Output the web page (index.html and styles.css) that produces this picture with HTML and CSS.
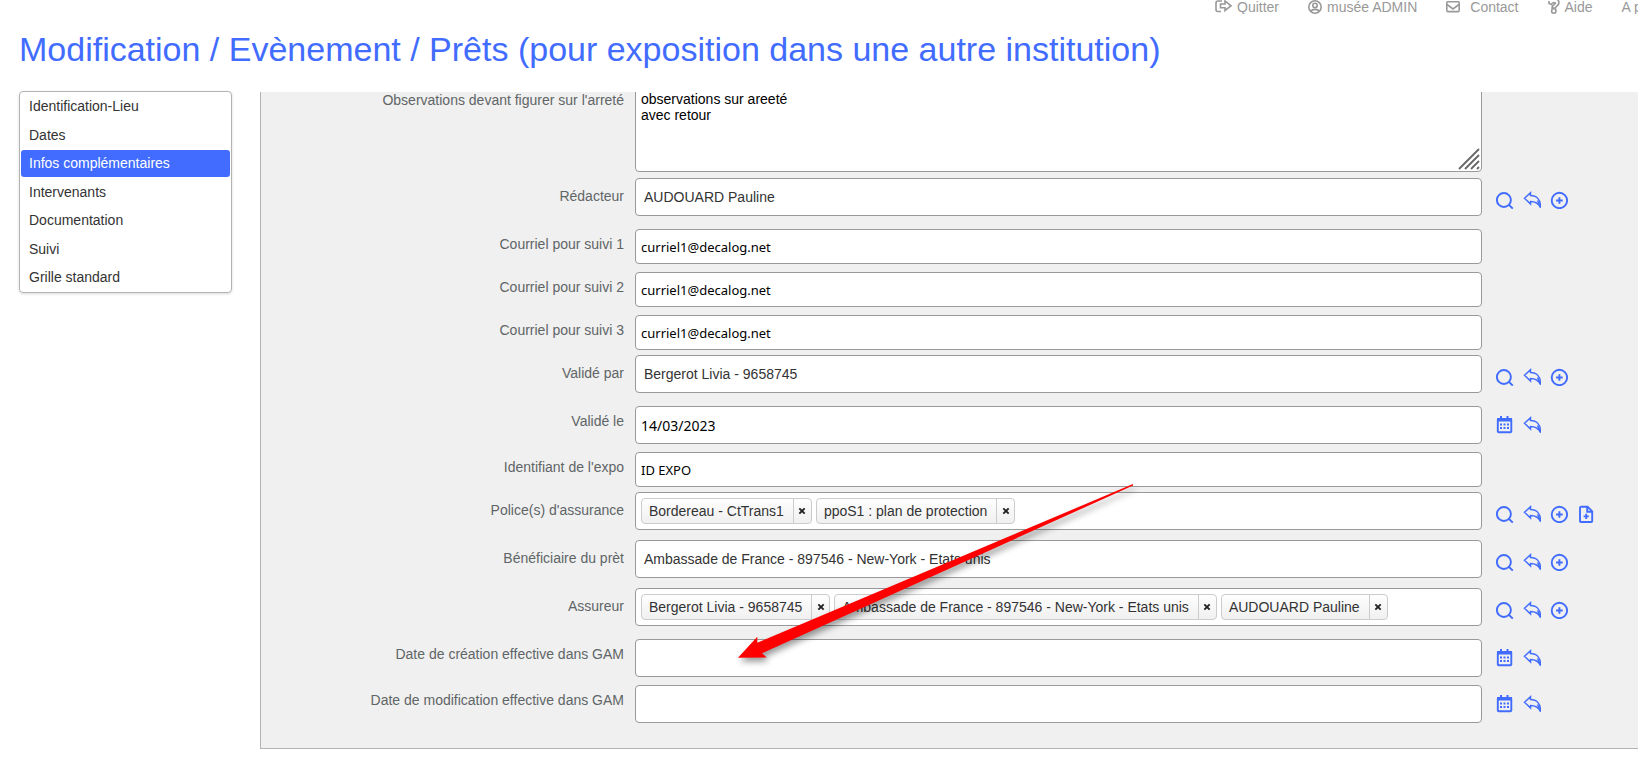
FILE: index.html
```html
<!DOCTYPE html>
<html lang="fr">
  <head>
    <meta charset="utf-8" />
    <title>Modification / Evènement / Prêts</title>
    <meta name="viewport" content="width=device-width, initial-scale=1" />
    <link rel="stylesheet" href="styles.css">
  </head>
  <body>
    <!-- icones -->
    <svg class="sprite" aria-hidden="true">
      <symbol id="i-search" viewBox="0 0 18 18">
        <circle cx="7.9" cy="9" r="7" /><path d="M12.8 13.8L16.8 17.6" />
      </symbol>
      <symbol id="i-reply" viewBox="0 0 18 18">
        <path class="fin" d="M1.5 7.3L7.5 1.8V4.6C13.5 4.6 17.6 8.500 17.6 16.6C15.8 12.400 13 10.400 7.5 10.400V13Z" /><path class="fin" d="M14.500 9.500L17.400 15.500" />
      </symbol>
      <symbol id="i-plus" viewBox="0 0 18 18">
        <circle cx="9.4" cy="9.5" r="7.7" /><path d="M9.4 6.2V12.8M6.1 9.5H12.7" />
      </symbol>
      <symbol id="i-file" viewBox="0 0 18 18">
        <path d="M4 1.8H10.6L15.2 6.4V16A1 1 0 0 1 14.2 17H4A1 1 0 0 1 3 16V2.8A1 1 0 0 1 4 1.8Z" /><path d="M10.2 2V6.8H15M9.2 8.8V14M6.6 11.4H11.8" />
      </symbol>
      <symbol id="i-calendar" viewBox="0 0 18 18">
        <path d="M2.6 3H15A1 1 0 0 1 15.300 4V15.5A1 1 0 0 1 14.500 16.2H2.6A1 1 0 0 1 1.8 15.5V4A1 1 0 0 1 2.6 3Z" />
        <path class="plein" d="M1 2H16V5.500H1ZM4 0H6V3H4ZM10.500 0H12.500V3H10.500Z" />
        <path class="plein" d="M4 7.500H6V9.500H4ZM7.500 7.500H9.500V9.500H7.500ZM11 7.500H13V9.500H11ZM4 11H6V13H4ZM7.500 11H9.500V13H7.500ZM11 11H13V13H11Z" />
      </symbol>
    </svg>

    <header>
      <nav class="liens">
        <a href="#quitter"><svg width="17" height="14" viewBox="0 0 17 14"><path d="M7 1H3A2 2 0 0 0 1 3V9.500A2 2 0 0 0 3 11.500H6" /><path d="M5.500 4H10V1L16 5.800L10 10.500V7.800H5.500Z" /></svg>Quitter</a>
        <a href="#compte"><svg width="14" height="14" viewBox="0 0 14 14"><circle cx="7" cy="7" r="6.200" /><circle cx="7" cy="5.400" r="2.200" /><path d="M3 11.500C3.500 8.600 10.500 8.600 11 11.500" /></svg>musée ADMIN</a>
        <a href="#contact" class="contact"><svg width="14" height="14" viewBox="0 0 14 14"><rect x="0.800" y="1.800" width="12.400" height="9.800" rx="1" /><path d="M1 4.500L7 9L13 4.500" /></svg>Contact</a>
        <a href="#aide"><svg width="12" height="14" viewBox="0 0 12 14"><path d="M1 1V3.500L3.500 4.500C4 3 5 2.500 6 2.500L7.500 3C7.500 4 4 5 4 8H7.500C7.500 6 11 5.500 11 2.500C11 1 10 0 9 -1" /><circle cx="5.800" cy="11" r="2.200" /></svg>Aide</a>
        <a href="#apropos">A propos</a>
      </nav>
      <h1>Modification / Evènement / Prêts (pour exposition dans une autre institution)</h1>
    </header>

    <main>
      <ul class="menu">
        <li><a href="#identification">Identification-Lieu</a></li>
        <li><a href="#dates">Dates</a></li>
        <li><a href="#infos" class="actif">Infos complémentaires</a></li>
        <li><a href="#intervenants">Intervenants</a></li>
        <li><a href="#documentation">Documentation</a></li>
        <li><a href="#suivi">Suivi</a></li>
        <li><a href="#grille">Grille standard</a></li>
      </ul>

      <form class="panneau">
        <div class="ligne observations">
          <label for="observations">Observations devant figurer sur l'arreté</label>
          <div class="zone">
            <textarea id="observations">observations sur areeté
avec retour</textarea>
            <svg class="poignee" width="22" height="22" viewBox="0 0 22 22"><path d="M1 21L21 1M7 21L21 7M13 21L21 13M19 21L21 19" /></svg>
          </div>
        </div>

        <div class="ligne liste">
          <label for="redacteur">Rédacteur</label>
          <input type="text" id="redacteur" value="AUDOUARD Pauline">
          <div class="actions">
            <button type="button" aria-label="Rechercher"><svg><use href="#i-search" /></svg></button>
            <button type="button" aria-label="Annuler"><svg><use href="#i-reply" /></svg></button>
            <button type="button" aria-label="Ajouter"><svg><use href="#i-plus" /></svg></button>
          </div>
        </div>

        <div class="ligne">
          <label for="courriel1">Courriel pour suivi 1</label>
          <input type="text" id="courriel1" value="curriel1@decalog.net">
        </div>

        <div class="ligne">
          <label for="courriel2">Courriel pour suivi 2</label>
          <input type="text" id="courriel2" value="curriel1@decalog.net">
        </div>

        <div class="ligne">
          <label for="courriel3">Courriel pour suivi 3</label>
          <input type="text" id="courriel3" value="curriel1@decalog.net">
        </div>

        <div class="ligne liste">
          <label for="valide-par">Validé par</label>
          <input type="text" id="valide-par" value="Bergerot Livia - 9658745">
          <div class="actions">
            <button type="button" aria-label="Rechercher"><svg><use href="#i-search" /></svg></button>
            <button type="button" aria-label="Annuler"><svg><use href="#i-reply" /></svg></button>
            <button type="button" aria-label="Ajouter"><svg><use href="#i-plus" /></svg></button>
          </div>
        </div>

        <div class="ligne date">
          <label for="valide-le">Validé le</label>
          <input type="text" id="valide-le" value="14/03/2023">
          <div class="actions">
            <button type="button" aria-label="Calendrier"><svg><use href="#i-calendar" /></svg></button>
            <button type="button" aria-label="Annuler"><svg><use href="#i-reply" /></svg></button>
          </div>
        </div>

        <div class="ligne">
          <label for="identifiant">Identifiant de l'expo</label>
          <input type="text" id="identifiant" value="ID EXPO">
        </div>

        <div class="ligne liste">
          <label for="police">Police(s) d'assurance</label>
          <div class="choix">
            <span class="tag"><span>Bordereau - CtTrans1</span><button type="button" aria-label="Retirer"><svg viewBox="0 0 6 6"><path d="M1 1L5 5M5 1L1 5" /></svg></button></span>
            <span class="tag"><span>ppoS1 : plan de protection</span><button type="button" aria-label="Retirer"><svg viewBox="0 0 6 6"><path d="M1 1L5 5M5 1L1 5" /></svg></button></span>
            <input type="text" id="police">
          </div>
          <div class="actions">
            <button type="button" aria-label="Rechercher"><svg><use href="#i-search" /></svg></button>
            <button type="button" aria-label="Annuler"><svg><use href="#i-reply" /></svg></button>
            <button type="button" aria-label="Ajouter"><svg><use href="#i-plus" /></svg></button>
            <button type="button" aria-label="Nouveau document"><svg><use href="#i-file" /></svg></button>
          </div>
        </div>

        <div class="ligne liste">
          <label for="beneficiaire">Bénéficiaire du prèt</label>
          <input type="text" id="beneficiaire" value="Ambassade de France - 897546 - New-York - Etats unis">
          <div class="actions">
            <button type="button" aria-label="Rechercher"><svg><use href="#i-search" /></svg></button>
            <button type="button" aria-label="Annuler"><svg><use href="#i-reply" /></svg></button>
            <button type="button" aria-label="Ajouter"><svg><use href="#i-plus" /></svg></button>
          </div>
        </div>

        <div class="ligne liste">
          <label for="assureur">Assureur</label>
          <div class="choix">
            <span class="tag"><span>Bergerot Livia - 9658745</span><button type="button" aria-label="Retirer"><svg viewBox="0 0 6 6"><path d="M1 1L5 5M5 1L1 5" /></svg></button></span>
            <span class="tag"><span>Ambassade de France - 897546 - New-York - Etats unis</span><button type="button" aria-label="Retirer"><svg viewBox="0 0 6 6"><path d="M1 1L5 5M5 1L1 5" /></svg></button></span>
            <span class="tag"><span>AUDOUARD Pauline</span><button type="button" aria-label="Retirer"><svg viewBox="0 0 6 6"><path d="M1 1L5 5M5 1L1 5" /></svg></button></span>
            <input type="text" id="assureur">
          </div>
          <div class="actions">
            <button type="button" aria-label="Rechercher"><svg><use href="#i-search" /></svg></button>
            <button type="button" aria-label="Annuler"><svg><use href="#i-reply" /></svg></button>
            <button type="button" aria-label="Ajouter"><svg><use href="#i-plus" /></svg></button>
          </div>
        </div>

        <div class="ligne date">
          <label for="creation">Date de création effective dans GAM</label>
          <input type="text" id="creation">
          <div class="actions">
            <button type="button" aria-label="Calendrier"><svg><use href="#i-calendar" /></svg></button>
            <button type="button" aria-label="Annuler"><svg><use href="#i-reply" /></svg></button>
          </div>
        </div>

        <div class="ligne date">
          <label for="modification">Date de modification effective dans GAM</label>
          <input type="text" id="modification">
          <div class="actions">
            <button type="button" aria-label="Calendrier"><svg><use href="#i-calendar" /></svg></button>
            <button type="button" aria-label="Annuler"><svg><use href="#i-reply" /></svg></button>
          </div>
        </div>

        <svg class="fleche" width="396" height="175" viewBox="0 0 396 175" aria-hidden="true">
          <path d="M0 173.700L19.300 152.700L19.300 158.700L395 0L395 1.500L24 169.300L28.700 173.500Z" />
        </svg>
      </form>
    </main>
  </body>
</html>
```
FILE: styles.css
```css
* {
  box-sizing: border-box;
}
body {
  margin: 0;
  background-color: #fff;
  font-family: "Liberation Sans", Arial, sans-serif;
  font-size: 14px;
  color: #333;
  overflow-x: hidden;
}
.sprite {
  display: none;
}
svg {
  fill: none;
  stroke: currentColor;
}
a {
  color: inherit;
  text-decoration: none;
}

/* entete */
header {
  height: 91px;
}
.liens {
  display: flex;
  gap: 29px;
  width: 423px;
  margin-left: auto;
  overflow: hidden;
  white-space: nowrap;
  line-height: 14px;
  color: #999;
}
.liens a {
  display: flex;
  gap: 5px;
  flex-shrink: 0;
}
.liens .contact {
  gap: 10px;
}
.liens svg {
  stroke-width: 1.6;
}
h1 {
  margin: 15px 0 0 19px;
  font-size: 34px;
  font-weight: normal;
  line-height: 40px;
  color: #416cff;
}

main {
  display: flex;
  align-items: flex-start;
  gap: 28px;
  padding-left: 19px;
}

/* menu de gauche */
.menu {
  display: flex;
  flex-direction: column;
  justify-content: space-between;
  width: 213px;
  min-height: 202px;
  flex-shrink: 0;
  margin: 0;
  padding: 1px;
  list-style: none;
  border: 1px solid #b3b3b3;
  border-radius: 4px;
  box-shadow: 0 1px 3px rgba(0, 0, 0, 0.15);
}
.menu a {
  display: block;
  padding: 0 8px;
  line-height: 27px;
  border-radius: 3px;
}
.menu .actif {
  background-color: #416cff;
  color: #fff;
}

/* formulaire */
.panneau {
  position: relative;
  flex: 1;
  min-width: 0;
  margin-top: 1px;
  padding-bottom: 21px;
  overflow: hidden;
  background-color: #f0f0f0;
  border-left: 1px solid #b3b3b3;
  border-bottom: 1px solid #b3b3b3;
}
.ligne {
  display: grid;
  grid-template-columns: 363px minmax(0, 1fr) 142px;
  align-items: start;
  padding: 4px 0;
}
.ligne.liste {
  padding: 1px 0 9px;
}
.ligne.observations {
  margin-top: -11px;
  padding-bottom: 5px;
}
label {
  margin-top: -4px;
  text-align: right;
  line-height: 38px;
  color: #5f6567;
}
.liste label {
  margin-top: -1px;
}
.ligne > input,
.zone,
.choix {
  margin: 0 14px 0 11px;
}
.ligne > input,
textarea,
.choix {
  background-color: #fff;
  border: 1px solid #999;
  border-radius: 4px;
}
.ligne > input {
  min-width: 0;
  height: 35px;
  padding: 0 5px;
  font-family: "Noto Sans", sans-serif;
  font-size: 13px;
  color: #000;
}
.ligne.date > input {
  height: 38px;
  font-size: 14px;
}
.ligne.liste > input {
  height: 38px;
  padding: 0 8px;
  font-family: inherit;
  font-size: 14px;
  color: #333;
}
.zone {
  position: relative;
}
textarea {
  display: block;
  width: 100%;
  height: 87px;
  padding: 5px;
  font: 14px/16px "Liberation Sans", Arial, sans-serif;
  color: #000;
  resize: none;
}
.poignee {
  position: absolute;
  right: 2px;
  bottom: 2px;
  stroke: #666;
  stroke-width: 1.8;
}

/* choix multiples */
.choix {
  display: flex;
  gap: 4px;
  height: 38px;
  padding: 5px;
}
.tag {
  display: flex;
  height: 26px;
  line-height: 24px;
  white-space: nowrap;
  background-image: linear-gradient(#fefefe, #f0f0f0);
  border: 1px solid #ccc;
  border-radius: 4px;
}
.tag span {
  padding: 0 9px 0 7px;
}
.tag button {
  display: flex;
  align-items: center;
  justify-content: center;
  width: 18px;
  padding: 0;
  background: none;
  border: none;
  border-left: 1px solid #ccc;
  color: #222;
}
.tag svg {
  width: 8px;
  height: 8px;
  stroke-width: 1.4;
}
.choix input {
  flex: 1;
  min-width: 0;
  border: none;
  background: none;
}

.actions {
  display: flex;
  gap: 9px;
  margin-top: 13px;
}
.date .actions {
  margin-top: 10px;
}
.actions button {
  width: 18px;
  height: 18px;
  padding: 0;
  background: none;
  border: none;
  color: #416cff;
  cursor: pointer;
}
.actions svg {
  display: block;
  width: 18px;
  height: 18px;
  stroke-width: 1.9;
}
.fin {
  stroke-width: 1.5;
}
.plein {
  fill: currentColor;
  stroke: none;
}

/* fleche posee sur le formulaire */
.fleche {
  position: absolute;
  top: 392px;
  left: 477px;
  overflow: visible;
  pointer-events: none;
  fill: #f00;
  stroke: none;
  filter: drop-shadow(2px 4px 3px rgba(0, 0, 0, 0.4));
}
```
